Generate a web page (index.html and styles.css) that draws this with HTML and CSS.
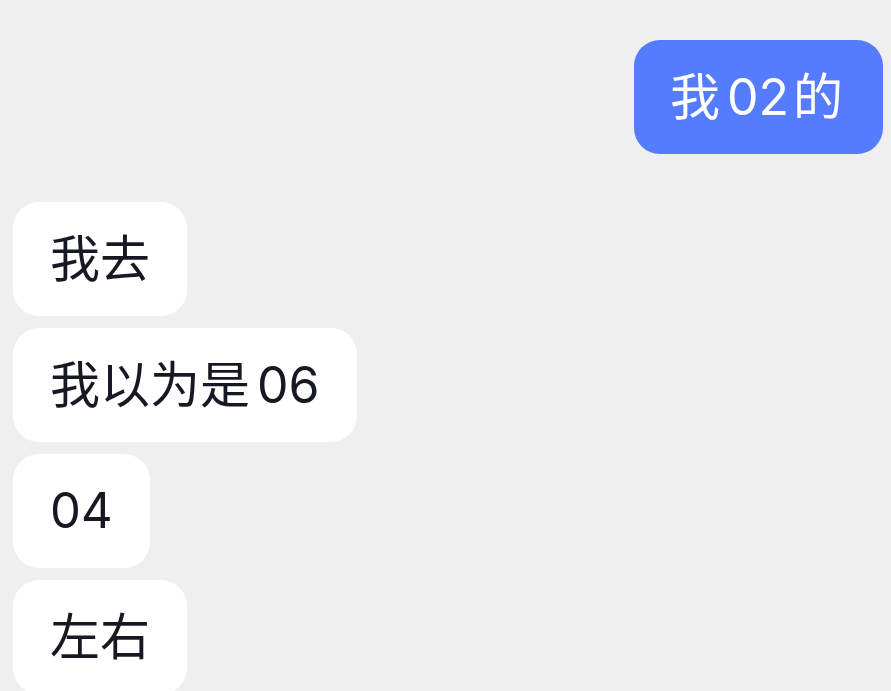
FILE: index.html
```html
<!DOCTYPE html>
<html lang="zh-CN">
<head>
<meta charset="utf-8">
<meta name="viewport" content="width=device-width, initial-scale=1">
<title>聊天</title>
<link rel="stylesheet" href="styles.css">
</head>
<body>
<main class="chat">
  <div class="group group-sent">
    <p class="bubble bubble-sent">我<span class="number">02</span>的</p>
  </div>
  <div class="group">
    <p class="bubble">我去</p>
    <p class="bubble">我以为是<span class="number number-last">06</span></p>
    <p class="bubble bubble-number">04</p>
    <p class="bubble">左右</p>
  </div>
</main>
</body>
</html>
```

FILE: styles.css
```css
* {
  box-sizing: border-box;
}

html {
  background: #efefef;
}

body {
  margin: 0;
  height: 100vh;
  overflow: hidden;
  font-family: Inter, "Noto Sans CJK SC", sans-serif;
  font-size: 50px;
  line-height: 66px;
  color: #161823;
}

.chat {
  display: flex;
  flex-direction: column;
  gap: 48px;
  padding: 40px 8px 0 13px;
}

.group {
  display: flex;
  flex-direction: column;
  align-items: flex-start;
  gap: 12px;
}

.group-sent {
  align-items: flex-end;
}

.bubble {
  margin: 0;
  padding: 24px 37px;
  border-radius: 26px;
  background: #fff;
}

.bubble-sent {
  padding: 24px 40px 24px 36px;
  background: #557bff;
  color: #fff;
}

.bubble-number {
  font-size: 49px;
}

.number {
  margin: 0 4px 0 7px;
}

.number-last {
  margin-right: 0;
}
```
